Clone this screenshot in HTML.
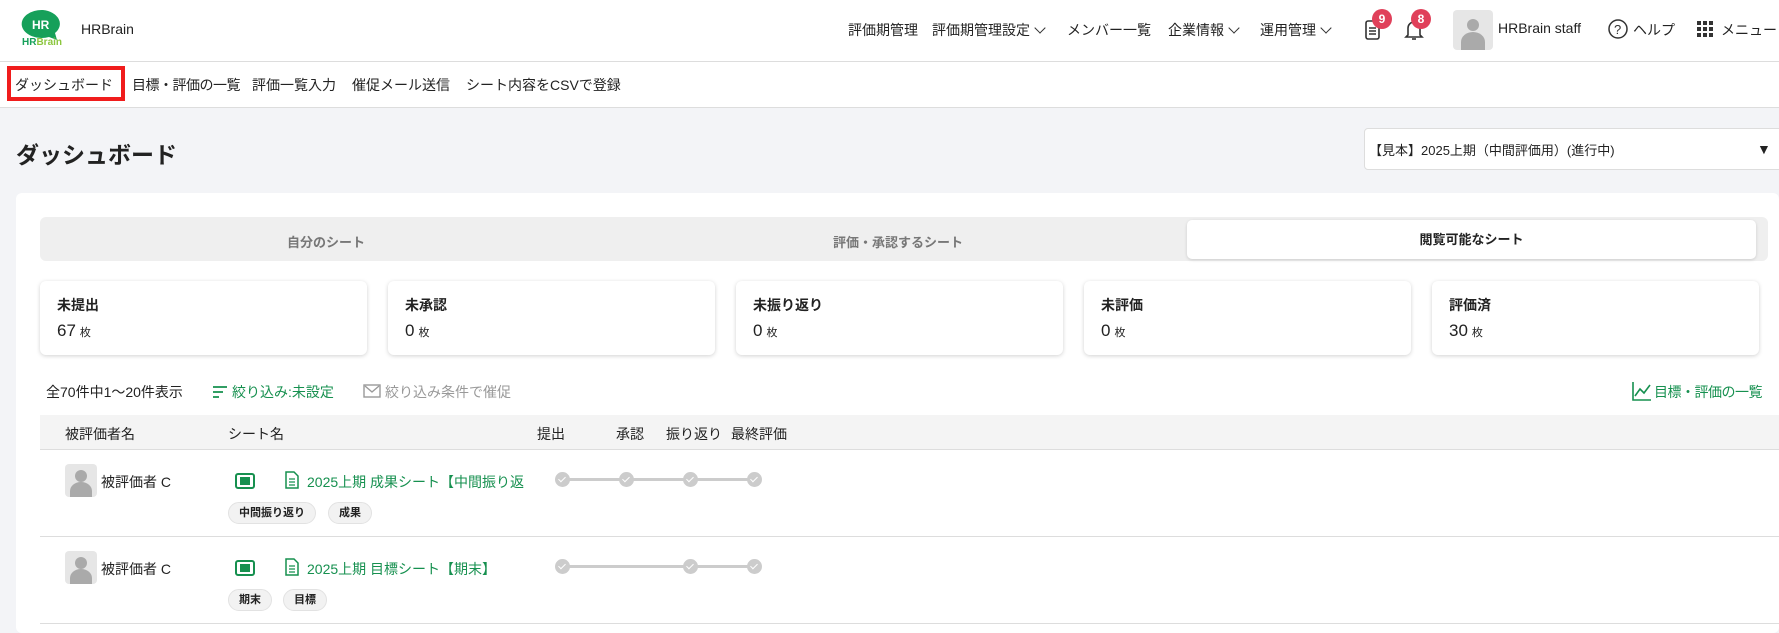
<!DOCTYPE html>
<html><head><meta charset="utf-8"><style>
*{box-sizing:border-box;margin:0;padding:0}
body{width:1779px;height:627px;overflow:hidden;background:#f3f4f7;font-family:"Liberation Sans","Noto Sans CJK JP",sans-serif;color:#222;position:relative;font-size:14px}
.abs{position:absolute}
.hdr{left:0;top:0;width:1779px;height:62px;background:#fff;border-bottom:1px solid #ddd}
.sub{left:0;top:62px;width:1779px;height:46px;background:#fff;border-bottom:1px solid #ddd}
.nav{top:20px;font-size:14px;white-space:nowrap}
.chev{display:inline-block;width:8px;height:8px;border-right:1.5px solid #333;border-bottom:1.5px solid #333;transform:rotate(45deg);margin-left:6px;position:relative;top:-3px}
.badge{width:20px;height:20px;border-radius:50%;background:#e0405a;color:#fff;font-size:12px;font-weight:bold;text-align:center;line-height:20px}
.card{left:16px;top:193px;width:1763px;height:440px;background:#fff;border-radius:6px}
.stat{top:281px;width:327px;height:74px;background:#fff;border-radius:6px;box-shadow:0 1px 4px rgba(0,0,0,.18);padding:14px 17px}
.stat b{display:block;font-size:14px;margin-bottom:6px}
.stat span{font-size:17px}.stat small{font-size:11px;margin-left:4px}
.green{color:#16904f}
.th{top:415px;left:40px;width:1739px;height:35px;background:#f4f4f4;border-bottom:1px solid #ddd}
.th div{position:absolute;top:9px;font-size:14px}
.row{left:40px;width:1739px;height:87px;border-bottom:1px solid #ddd}
.av{width:32px;height:33px;background:#e6e6e6;border-radius:4px;overflow:hidden}
.tag{top:52px;height:22px;border-radius:11px;background:#f2f2f2;border:1px solid #e2e2e2;font-size:11px;font-weight:bold;line-height:20px;padding:0 10px}
.dot{width:15px;height:15px;border-radius:50%;background:#ccc;top:22px}
.dot:after{content:"";position:absolute;left:5px;top:3px;width:3px;height:6px;border-right:1.5px solid #fff;border-bottom:1.5px solid #fff;transform:rotate(45deg)}
.line{height:3px;background:#ccc;top:28px}
</style></head><body>
<div class="abs hdr"></div>
<svg class="abs" style="left:21px;top:8px" width="44" height="40" viewBox="0 0 44 40"><path d="M22 2a20 14 0 1 0 6 27l8 3-2-7a20 14 0 0 0-12-23z" fill="#16a05a"/><text x="11" y="21" font-size="12" font-weight="bold" fill="#fff" font-family="Liberation Sans">HR</text></svg>
<div class="abs" style="left:22px;top:37px;font-size:10px;font-weight:bold;color:#16a05a">HR<span style="color:#8cc63f">Brain</span></div>
<div class="abs" style="left:81px;top:21px;font-size:14px">HRBrain</div>
<div class="abs nav" style="left:848px">評価期管理</div>
<div class="abs nav" style="left:932px">評価期管理設定<span class="chev"></span></div>
<div class="abs nav" style="left:1067px">メンバー一覧</div>
<div class="abs nav" style="left:1168px">企業情報<span class="chev"></span></div>
<div class="abs nav" style="left:1260px">運用管理<span class="chev"></span></div>
<svg class="abs" style="left:1364px;top:18px" width="18" height="24" viewBox="0 0 18 24"><rect x="2" y="3" width="13" height="18" rx="2" fill="none" stroke="#333" stroke-width="1.6"/><path d="M5 10h7M5 13h7M5 16h7" stroke="#333" stroke-width="1.4"/></svg>
<div class="abs badge" style="left:1372px;top:9px">9</div>
<svg class="abs" style="left:1403px;top:18px" width="22" height="24" viewBox="0 0 22 24"><path d="M5 17V10a6 6 0 0 1 12 0v7l2 2H3z" fill="none" stroke="#333" stroke-width="1.6"/><path d="M9 21h4" stroke="#333" stroke-width="1.6"/></svg>
<div class="abs badge" style="left:1411px;top:9px">8</div>
<div class="abs av" style="left:1453px;top:10px;width:40px;height:40px"><svg width="40" height="40"><circle cx="20" cy="15" r="6" fill="#aaa"/><path d="M8 40v-8a12 10 0 0 1 24 0v8z" fill="#aaa"/></svg></div>
<div class="abs nav" style="left:1498px">HRBrain staff</div>
<svg class="abs" style="left:1607px;top:18px" width="22" height="22"><circle cx="11" cy="11" r="9" fill="none" stroke="#333" stroke-width="1.5"/><text x="7" y="16" font-size="13" fill="#333" font-family="Liberation Sans">?</text></svg>
<div class="abs nav" style="left:1633px">ヘルプ</div>
<svg class="abs" style="left:1697px;top:21px" width="16" height="16"><g fill="#333"><rect x="0" y="0" width="4" height="4"/><rect x="6" y="0" width="4" height="4"/><rect x="12" y="0" width="4" height="4"/><rect x="0" y="6" width="4" height="4"/><rect x="6" y="6" width="4" height="4"/><rect x="12" y="6" width="4" height="4"/><rect x="0" y="12" width="4" height="4"/><rect x="6" y="12" width="4" height="4"/><rect x="12" y="12" width="4" height="4"/></g></svg>
<div class="abs nav" style="left:1721px">メニュー</div>

<div class="abs sub"></div>
<div class="abs" style="left:7px;top:66px;width:118px;height:35px;border:4px solid #f01c1c"></div>
<div class="abs" style="left:15px;top:75px;font-size:14px">ダッシュボード</div>
<div class="abs" style="left:132px;top:75px;font-size:14px;letter-spacing:-0.5px">目標・評価の一覧</div>
<div class="abs" style="left:252px;top:75px;font-size:14px">評価一覧入力</div>
<div class="abs" style="left:352px;top:75px;font-size:14px">催促メール送信</div>
<div class="abs" style="left:466px;top:75px;font-size:14px">シート内容をCSVで登録</div>

<div class="abs" style="left:16px;top:136px;font-size:23px;font-weight:bold">ダッシュボード</div>
<div class="abs" style="left:1364px;top:128px;width:420px;height:42px;background:#fff;border:1px solid #ddd;border-radius:4px;font-size:13px;padding:11px 4px">【見本】2025上期（中間評価用）(進行中)<span style="position:absolute;left:392px;top:12px;font-size:14px">▼</span></div>

<div class="abs card"></div>
<div class="abs" style="left:40px;top:217px;width:1728px;height:44px;background:#efefef;border-radius:6px"></div>
<div class="abs" style="left:287px;top:232px;font-size:13px;color:#777;font-weight:bold">自分のシート</div>
<div class="abs" style="left:833px;top:232px;font-size:13px;color:#777;font-weight:bold">評価・承認するシート</div>
<div class="abs" style="left:1187px;top:220px;width:569px;height:39px;background:#fff;border-radius:5px;box-shadow:0 1px 3px rgba(0,0,0,.15);text-align:center;line-height:39px;font-size:13px;font-weight:bold">閲覧可能なシート</div>

<div class="abs stat" style="left:40px"><b>未提出</b><span>67</span><small>枚</small></div>
<div class="abs stat" style="left:388px"><b>未承認</b><span>0</span><small>枚</small></div>
<div class="abs stat" style="left:736px"><b>未振り返り</b><span>0</span><small>枚</small></div>
<div class="abs stat" style="left:1084px"><b>未評価</b><span>0</span><small>枚</small></div>
<div class="abs stat" style="left:1432px"><b>評価済</b><span>30</span><small>枚</small></div>

<div class="abs" style="left:46px;top:382px;font-size:14px">全70件中1〜20件表示</div>
<svg class="abs" style="left:213px;top:386px" width="14" height="12"><path d="M0 1h14M0 6h10M0 11h6" stroke="#16904f" stroke-width="1.8"/></svg>
<div class="abs green" style="left:232px;top:382px;font-size:14px">絞り込み:未設定</div>
<svg class="abs" style="left:363px;top:384px" width="18" height="14"><rect x="1" y="1" width="16" height="12" fill="none" stroke="#999" stroke-width="1.4"/><path d="M2 2l7 6 7-6" fill="none" stroke="#999" stroke-width="1.4"/></svg>
<div class="abs" style="left:385px;top:382px;font-size:14px;color:#999">絞り込み条件で催促</div>
<svg class="abs" style="left:1632px;top:381px" width="20" height="20"><path d="M1 1v18h18" fill="none" stroke="#16904f" stroke-width="1.6"/><path d="M3 15l5-7 4 4 6-8" fill="none" stroke="#16904f" stroke-width="1.6"/></svg>
<div class="abs green" style="left:1654px;top:382px;font-size:14px;letter-spacing:-0.5px">目標・評価の一覧</div>

<div class="abs th"><div style="left:25px">被評価者名</div><div style="left:188px">シート名</div><div style="left:497px">提出</div><div style="left:576px">承認</div><div style="left:626px">振り返り</div><div style="left:691px">最終評価</div></div>

<div class="abs row" style="top:450px">
<div class="abs av" style="left:25px;top:14px"><svg width="32" height="33"><circle cx="16" cy="12" r="6" fill="#aaa"/><path d="M5 33v-6a11 9 0 0 1 22 0v6z" fill="#aaa"/></svg></div>
<div class="abs" style="left:61px;top:22px">被評価者 C</div>
<svg class="abs" style="left:195px;top:23px" width="20" height="16"><rect x="1" y="1" width="18" height="14" rx="2" fill="none" stroke="#16904f" stroke-width="2"/><rect x="5" y="4" width="10" height="8" fill="#16904f"/></svg>
<svg class="abs" style="left:245px;top:21px" width="14" height="18"><path d="M1 1h8l4 4v12H1z" fill="none" stroke="#16904f" stroke-width="1.5"/><path d="M4 8h6M4 11h6M4 14h6" stroke="#16904f" stroke-width="1.2"/></svg>
<div class="abs green" style="left:267px;top:22px;font-size:14px">2025上期 成果シート【中間振り返</div>
<div class="abs tag" style="left:188px">中間振り返り</div><div class="abs tag" style="left:288px">成果</div>
<div class="abs line" style="left:523px;width:190px"></div>
<div class="abs dot" style="left:515px"></div><div class="abs dot" style="left:579px"></div><div class="abs dot" style="left:643px"></div><div class="abs dot" style="left:707px"></div>
</div>
<div class="abs row" style="top:537px">
<div class="abs av" style="left:25px;top:14px"><svg width="32" height="33"><circle cx="16" cy="12" r="6" fill="#aaa"/><path d="M5 33v-6a11 9 0 0 1 22 0v6z" fill="#aaa"/></svg></div>
<div class="abs" style="left:61px;top:22px">被評価者 C</div>
<svg class="abs" style="left:195px;top:23px" width="20" height="16"><rect x="1" y="1" width="18" height="14" rx="2" fill="none" stroke="#16904f" stroke-width="2"/><rect x="5" y="4" width="10" height="8" fill="#16904f"/></svg>
<svg class="abs" style="left:245px;top:21px" width="14" height="18"><path d="M1 1h8l4 4v12H1z" fill="none" stroke="#16904f" stroke-width="1.5"/><path d="M4 8h6M4 11h6M4 14h6" stroke="#16904f" stroke-width="1.2"/></svg>
<div class="abs green" style="left:267px;top:22px;font-size:14px">2025上期 目標シート【期末】</div>
<div class="abs tag" style="left:188px">期末</div><div class="abs tag" style="left:243px">目標</div>
<div class="abs line" style="left:523px;width:190px"></div>
<div class="abs dot" style="left:515px"></div><div class="abs dot" style="left:643px"></div><div class="abs dot" style="left:707px"></div>
</div>
</body></html>
